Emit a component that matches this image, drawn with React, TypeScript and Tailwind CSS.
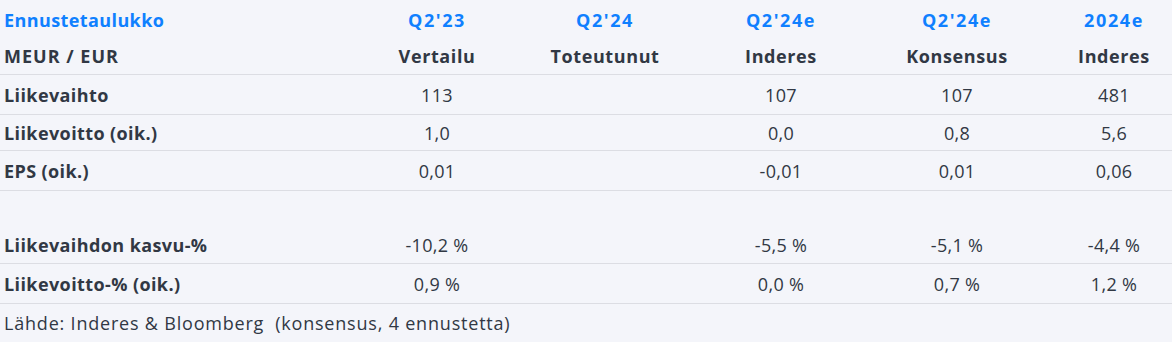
const cols = "grid grid-cols-[368px_138px_198px_154px_198px_116px] items-center";

type RowProps = {
  label: string;
  values: string[];
  h: string;
};

function Row({ label, values, h }: RowProps) {
  return (
    <div className={`${cols} ${h} border-b border-[#dcdde3]`}>
      <div className="pl-[4px] font-bold tracking-[0.4px]">{label}</div>
      {values.map((v, i) => (
        <div key={i} className="text-center tracking-[0.3px]">
          {v}
        </div>
      ))}
    </div>
  );
}

export default function App() {
  return (
    <div
      className="w-[1172px] h-[342px] bg-[#f4f5fa] text-[#313844] text-[18px] leading-none overflow-hidden"
      style={{ fontFamily: "'Open Sans', 'Liberation Sans', sans-serif" }}
    >
      <div className={`${cols} h-[37px] font-bold text-[#0f80ff] tracking-[1.6px] pt-[2px]`}>
        <div className="pl-[4px] tracking-[0.4px]">Ennustetaulukko</div>
        <div className="text-center">Q2'23</div>
        <div className="text-center">Q2'24</div>
        <div className="text-center">Q2'24e</div>
        <div className="text-center">Q2'24e</div>
        <div className="text-center">2024e</div>
      </div>
      <div className={`${cols} h-[38px] font-bold tracking-[0.6px] border-b border-[#dcdde3]`}>
        <div className="pl-[4px] tracking-[1px]">MEUR / EUR</div>
        <div className="text-center">Vertailu</div>
        <div className="text-center">Toteutunut</div>
        <div className="text-center">Inderes</div>
        <div className="text-center">Konsensus</div>
        <div className="text-center">Inderes</div>
      </div>
      <Row label="Liikevaihto" values={["113", "", "107", "107", "481"]} h="h-[40px]" />
      <Row label="Liikevoitto (oik.)" values={["1,0", "", "0,0", "0,8", "5,6"]} h="h-[36px]" />
      <Row label="EPS (oik.)" values={["0,01", "", "-0,01", "0,01", "0,06"]} h="h-[40px]" />
      <div className="h-[36px]" />
      <Row
        label="Liikevaihdon kasvu-%"
        values={["-10,2 %", "", "-5,5 %", "-5,1 %", "-4,4 %"]}
        h="h-[37px]"
      />
      <Row
        label="Liikevoitto-% (oik.)"
        values={["0,9 %", "", "0,0 %", "0,7 %", "1,2 %"]}
        h="h-[40px]"
      />
      <div className="h-[38px] flex items-center pl-[4px] tracking-[0.8px]">
        Lähde: Inderes &amp; Bloomberg&nbsp; (konsensus, 4 ennustetta)
      </div>
    </div>
  );
}
